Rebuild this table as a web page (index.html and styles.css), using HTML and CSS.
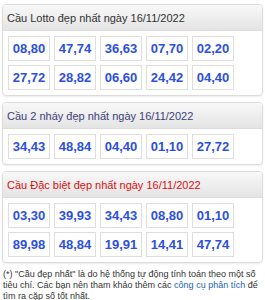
FILE: index.html
```html
<!DOCTYPE html>
<html>
<head>
<meta charset="utf-8">
<link rel="stylesheet" href="styles.css">
</head>
<body>
<div class="card">
  <div class="head">Cầu Lotto đẹp nhất ngày 16/11/2022</div>
  <div class="grid">
    <span class="num">08,80</span><span class="num">47,74</span><span class="num">36,63</span><span class="num">07,70</span><span class="num">02,20</span>
    <span class="num">27,72</span><span class="num">28,82</span><span class="num">06,60</span><span class="num">24,42</span><span class="num">04,40</span>
  </div>
</div>
<div class="card">
  <div class="head blue">Cầu 2 nháy đẹp nhất ngày 16/11/2022</div>
  <div class="grid">
    <span class="num">34,43</span><span class="num">48,84</span><span class="num">04,40</span><span class="num">01,10</span><span class="num">27,72</span>
  </div>
</div>
<div class="card">
  <div class="head red">Cầu Đặc biệt đẹp nhất ngày 16/11/2022</div>
  <div class="grid">
    <span class="num">03,30</span><span class="num">39,93</span><span class="num">34,43</span><span class="num">08,80</span><span class="num">01,10</span>
    <span class="num">89,98</span><span class="num">48,84</span><span class="num">19,91</span><span class="num">14,41</span><span class="num">47,74</span>
  </div>
</div>
<p class="note">(*) "Cầu đẹp nhất" là do hệ thống tự động tính toán theo một số tiêu chí. Các bạn nên tham khảo thêm các <a href="#">công cụ phân tích</a> để tìm ra cặp số tốt nhất.</p>
</body>
</html>
```
FILE: styles.css
```css
html, body { margin: 0; background: #fff; }
body {
  padding: 4px 2px 0 2px;
  font-family: "Liberation Sans", Arial, sans-serif;
}
.card {
  border: 1px solid #dcdcdc;
  border-radius: 4px;
  box-shadow: 0 1px 2px rgba(0,0,0,0.08);
  margin-bottom: 6px;
  overflow: hidden;
}
.head {
  height: 25px;
  line-height: 26px;
  padding: 0 4px;
  font-size: 11px;
  color: #333;
  background: linear-gradient(#f8f8f8, #e4e4e4);
  border-bottom: 1px solid #dcdcdc;
  white-space: nowrap;
}
.head.blue { color: #3b3f7a; }
.head.red { color: #d91010; }
.grid {
  display: grid;
  grid-template-columns: repeat(5, 42px);
  gap: 4px;
  padding: 5px 5px 5px 5px;
}
.num {
  height: 23px;
  line-height: 23px;
  border: 1px solid #dedede;
  text-align: center;
  font-weight: bold;
  font-size: 13px;
  color: #2c4fe0;
}
.note {
  margin: 0;
  padding: 0 1px;
  font-size: 9px;
  line-height: 11px;
  color: #333;
}
.note a { color: #1a5fb4; text-decoration: none; }
```
